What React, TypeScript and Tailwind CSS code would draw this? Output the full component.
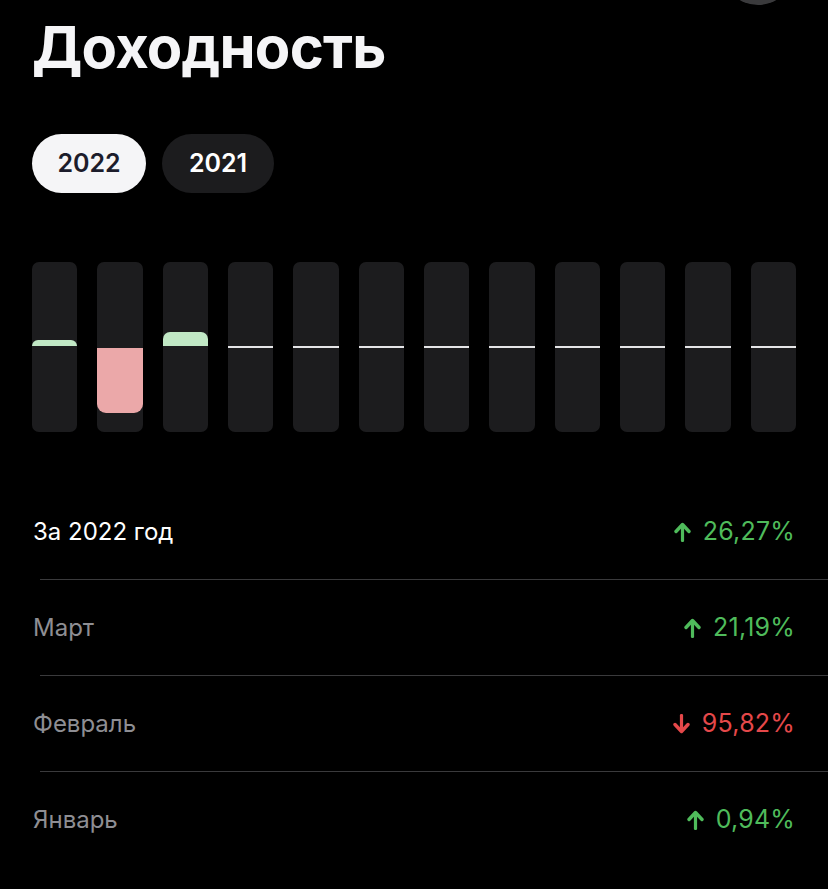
import React from 'react'

type Bar = { value: number } // процент относительно шкалы, + вверх, - вниз

const bars: Bar[] = [
  { value: 7 },
  { value: -77 },
  { value: 17 },
  { value: 0 },
  { value: 0 },
  { value: 0 },
  { value: 0 },
  { value: 0 },
  { value: 0 },
  { value: 0 },
  { value: 0 },
  { value: 0 },
]

const rows = [
  { label: 'За 2022 год', value: '26,27%', up: true, main: true },
  { label: 'Март', value: '21,19%', up: true },
  { label: 'Февраль', value: '95,82%', up: false },
  { label: 'Январь', value: '0,94%', up: true },
]

function Arrow({ up }: { up: boolean }) {
  return (
    <svg width="17" height="20" viewBox="0 0 17 20" fill="none" className={up ? '' : 'rotate-180'}>
      <path d="M8.5 18.5V4" stroke="currentColor" strokeWidth="3.2" strokeLinecap="round" />
      <path d="M2 9.5L8.5 2.5 15 9.5" stroke="currentColor" strokeWidth="3.4" strokeLinecap="round" strokeLinejoin="round" />
    </svg>
  )
}

function MonthBar({ value }: Bar) {
  // высота половины столбика = 84px
  const h = Math.abs(value) * 0.84
  return (
    <div className="h-[170px] rounded-[7px] bg-[#1c1c1e] overflow-hidden flex flex-col">
      <div className="h-[84px] flex flex-col justify-end">
        {value > 0 && <div className="bg-[#c1e8c5] rounded-t-[7px]" style={{ height: h }} />}
      </div>
      <div className={value === 0 ? 'h-[2px] bg-[#e5e5e7]' : 'h-[2px]'} />
      <div className="flex-1">
        {value < 0 && <div className="bg-[#eba8a9] rounded-b-[9px]" style={{ height: h }} />}
      </div>
    </div>
  )
}

export default function App() {
  return (
    <div className="relative min-h-[889px] w-full bg-black text-white overflow-hidden font-['Inter','Noto_Sans',sans-serif]">
      <div className="absolute left-[722px] top-[-67px] w-[72px] h-[72px] rounded-full bg-[#3a3a3c]" />

      <div className="px-8 pt-[12px]">
        <h1 className="text-[58px] font-bold leading-[70px] tracking-[-0.8px] text-[#f5f5f7]">Доходность</h1>

        <div className="flex gap-4 mt-[52px]">
          <button className="h-[59px] w-[114px] rounded-full bg-[#f5f5f7] text-[#1c1c2b] text-[25px] font-semibold">2022</button>
          <button className="h-[59px] w-[112px] rounded-full bg-[#1c1c1e] text-white text-[25px] font-semibold">2021</button>
        </div>

        <div className="grid grid-cols-12 gap-x-[20px] mt-[69px]">
          {bars.map((b, i) => (
            <MonthBar key={i} value={b.value} />
          ))}
        </div>
      </div>

      <div className="mt-[52px]">
        {rows.map((r, i) => (
          <div key={i} className={i > 0 ? 'ml-10 border-t border-[#3a3a3c]' : 'ml-10'}>
            <div className="h-[95px] -ml-[7px] pr-[33px] flex items-center justify-between">
              <span className={r.main ? 'text-[24px] text-white' : 'text-[24px] text-[#8e8e93]'}>{r.label}</span>
              <span className={r.up ? 'flex items-center gap-[12px] text-[25px] tracking-[0.2px] text-[#4fbb5b]' : 'flex items-center gap-[12px] text-[25px] tracking-[0.2px] text-[#e5484a]'}>
                <Arrow up={r.up} />
                {r.value}
              </span>
            </div>
          </div>
        ))}
      </div>
    </div>
  )
}
